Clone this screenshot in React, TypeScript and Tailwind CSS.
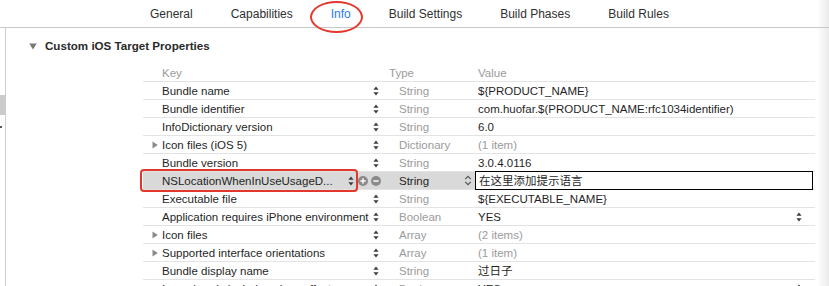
import React from 'react'

type Row = {
    key: string
    type: string
    value: string
    disclosure?: boolean
    muted?: boolean
    valueStepper?: boolean
    selected?: boolean
}

const rows: Row[] = [
    { key: 'Bundle name', type: 'String', value: '${PRODUCT_NAME}' },
    { key: 'Bundle identifier', type: 'String', value: 'com.huofar.$(PRODUCT_NAME:rfc1034identifier)' },
    { key: 'InfoDictionary version', type: 'String', value: '6.0' },
    { key: 'Icon files (iOS 5)', type: 'Dictionary', value: '(1 item)', disclosure: true, muted: true },
    { key: 'Bundle version', type: 'String', value: '3.0.4.0116' },
    { key: 'NSLocationWhenInUseUsageD...', type: 'String', value: '在这里添加提示语言', selected: true },
    { key: 'Executable file', type: 'String', value: '${EXECUTABLE_NAME}' },
    { key: 'Application requires iPhone environment', type: 'Boolean', value: 'YES', valueStepper: true },
    { key: 'Icon files', type: 'Array', value: '(2 items)', disclosure: true, muted: true },
    { key: 'Supported interface orientations', type: 'Array', value: '(1 item)', disclosure: true, muted: true },
    { key: 'Bundle display name', type: 'String', value: '过日子' },
    { key: 'Icon already includes gloss effects', type: 'Boolean', value: 'YES', valueStepper: true },
]

const tabs = ['General', 'Capabilities', 'Info', 'Build Settings', 'Build Phases', 'Build Rules']

function Stepper() {
    return (
        <svg width="6" height="10" viewBox="0 0 6 10" className="text-[#3c3c3c]">
            <path d="M3 0.5 L5.6 3.8 H0.4 Z" fill="currentColor" />
            <path d="M3 9.5 L5.6 6.2 H0.4 Z" fill="currentColor" />
        </svg>
    )
}

function PopupChevron() {
    return (
        <svg width="8" height="11" viewBox="0 0 8 11" className="text-[#555]">
            <path d="M1.2 4.2 L4 1.4 L6.8 4.2" fill="none" stroke="currentColor" strokeWidth="1.2" />
            <path d="M1.2 6.8 L4 9.6 L6.8 6.8" fill="none" stroke="currentColor" strokeWidth="1.2" />
        </svg>
    )
}

function RoundButton({ plus }: { plus?: boolean }) {
    return (
        <svg width="10" height="10" viewBox="0 0 10 10">
            <circle cx="5" cy="5" r="5" fill="#8a8a8a" />
            <rect x="2.3" y="4.3" width="5.4" height="1.4" fill="white" />
            {plus && <rect x="4.3" y="2.3" width="1.4" height="5.4" fill="white" />}
        </svg>
    )
}

function Disclosure() {
    return (
        <svg width="6" height="8" viewBox="0 0 6 8" className="text-[#8a8a8a]">
            <path d="M0.5 0.5 L5.8 4 L0.5 7.5 Z" fill="currentColor" />
        </svg>
    )
}

function PlistRow({ row }: { row: Row }) {
    if (row.selected) {
        return (
            <div className="relative flex h-[18px] border-b border-[#e3e3e3]">
                <div className="flex w-[238px] items-center bg-[#d9d9d9]">
                    <div className="w-[205px] truncate pl-[19px] text-[#1f1f1f]">{row.key}</div>
                    <div className="flex w-[11px] justify-center"><Stepper /></div>
                    <div className="flex gap-[3px] pl-[2px]">
                        <RoundButton plus />
                        <RoundButton />
                    </div>
                </div>
                <div className="flex w-[94px] items-center justify-between bg-[#d9d9d9] pl-[18px] pr-[3px] text-[#1f1f1f]">
                    <span>{row.type}</span>
                    <PopupChevron />
                </div>
                <div className="-my-px flex h-[19px] w-[338px] items-center border border-black bg-white pl-[3px] text-[#1f1f1f]">
                    {row.value}
                </div>
                <div className="pointer-events-none absolute left-[-3px] top-[-3px] h-[23px] w-[218px] rounded-[4px] border-[2.5px] border-[#e2372c]" />
            </div>
        )
    }
    return (
        <div className="flex h-[18px] items-center border-b border-[#e3e3e3]">
            <div className="relative w-[227px] truncate pl-[19px] text-[#1f1f1f]">
                {row.disclosure && (
                    <span className="absolute left-[9px] top-[3px]"><Disclosure /></span>
                )}
                {row.key}
            </div>
            <div className="flex w-[11px] justify-center"><Stepper /></div>
            <div className="w-[94px] pl-[18px] text-[#9b9b9b]">{row.type}</div>
            <div className="flex flex-1 items-center justify-between pl-[3px] pr-[13px]">
                <span className={row.muted ? 'text-[#9b9b9b]' : 'text-[#1f1f1f]'}>{row.value}</span>
                {row.valueStepper && <Stepper />}
            </div>
        </div>
    )
}

export default function App() {
    return (
        <div className="relative h-[286px] w-[829px] overflow-hidden bg-white font-['Liberation_Sans','Noto_Sans_CJK_SC',sans-serif]">
            {/* tab bar */}
            <div className="flex h-[28px] border-b border-[#c9c9c9]">
                <div className="flex flex-1 items-center gap-[38px] pl-[150px] text-[12px] leading-[14px] text-[#2f2f2f]">
                    {tabs.map((t) => (
                        <span key={t} className={t === 'Info' ? 'relative text-[#2b7cf0]' : ''}>
                            {t}
                            {t === 'Info' && (
                                <span className="absolute left-[-21px] top-[-6px] h-[32px] w-[53px] rounded-[50%] border-[2.5px] border-[#e2372c]" />
                            )}
                        </span>
                    ))}
                </div>
                <div className="w-[12px] bg-gradient-to-r from-white to-[#ebebeb]" />
            </div>

            <div className="flex h-[258px]">
                {/* sidebar edge */}
                <div className="w-[6px] border-r border-[#cfcfcf]">
                    <div className="mt-[67px] h-[20px] w-[5px] bg-[#cbcbcb]" />
                    <div className="mt-[11px] h-[2px] w-[2px] bg-[#555]" />
                </div>

                {/* main */}
                <div className="flex-1">
                    <div className="mt-[9px] flex h-[18px] items-center">
                        <svg width="8" height="7" viewBox="0 0 8 7" className="ml-[23px] text-[#777]">
                            <path d="M0.3 0.5 H7.7 L4 6.5 Z" fill="currentColor" />
                        </svg>
                        <span className="ml-[8px] text-[11.6px] font-bold text-[#2a2a2a]">Custom iOS Target Properties</span>
                    </div>

                    <div className="ml-[137px] mt-[9px] w-[672px] text-[11.5px] leading-[14px]">
                        <div className="flex h-[18px] items-center border-b border-[#e3e3e3] text-[#9b9b9b]">
                            <div className="w-[238px] pl-[19px]">Key</div>
                            <div className="w-[94px] pl-[8px]">Type</div>
                            <div className="pl-[3px]">Value</div>
                        </div>
                        {rows.map((r) => (
                            <PlistRow key={r.key} row={r} />
                        ))}
                    </div>
                </div>

                <div className="w-[12px] bg-gradient-to-r from-white to-[#ebebeb]" />
            </div>
        </div>
    )
}
